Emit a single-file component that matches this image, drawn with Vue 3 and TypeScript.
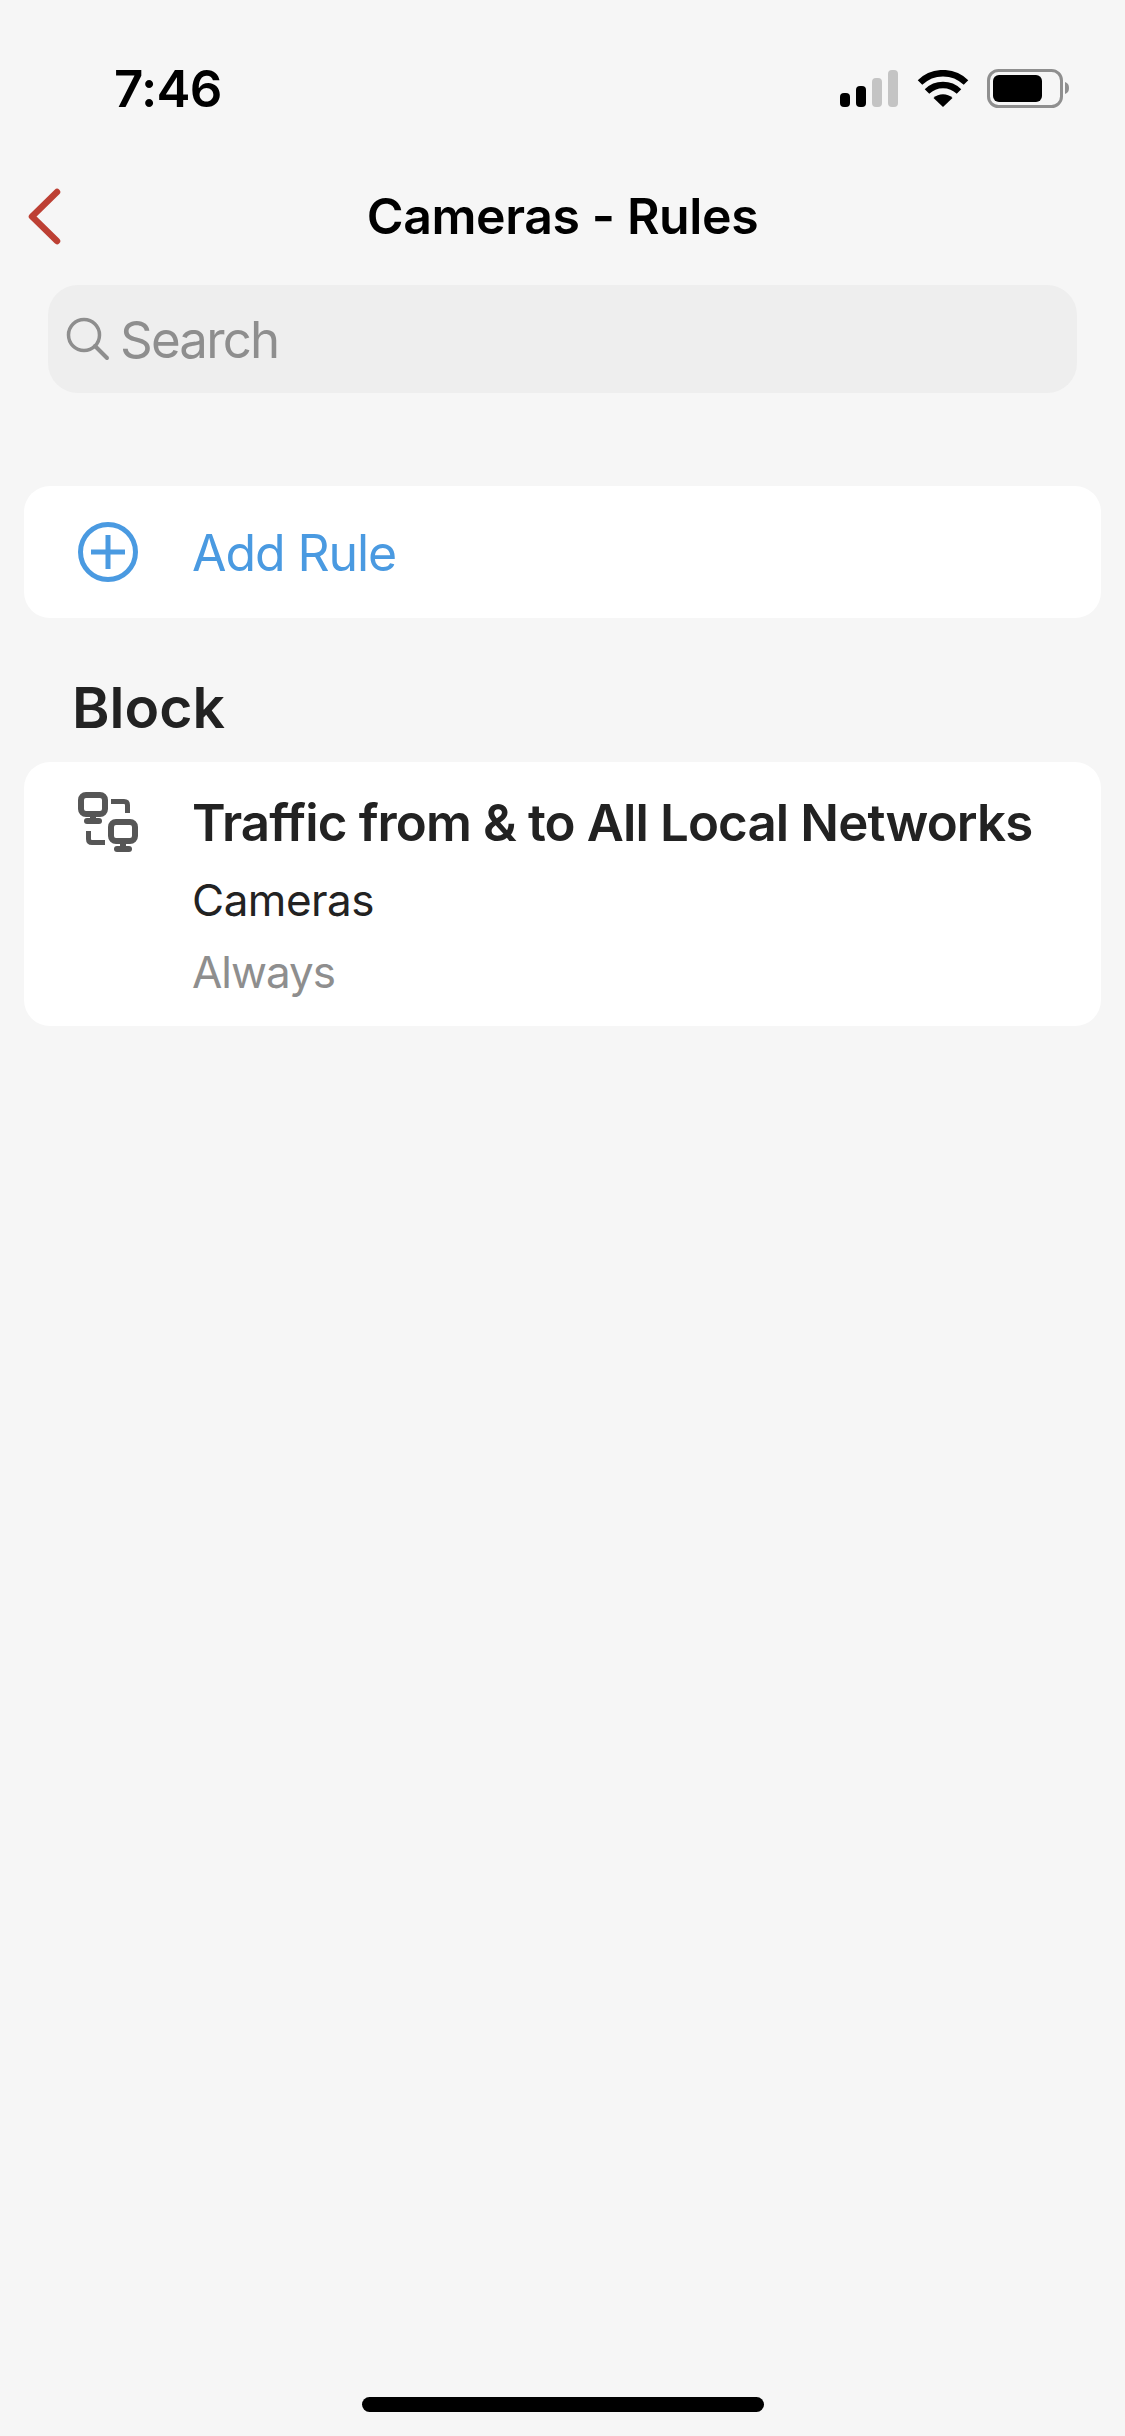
<template>
  <div class="screen">
    <div class="status-bar">
      <span class="time">7:46</span>
      <div class="status-icons">
        <svg class="signal" width="59" height="38" viewBox="0 0 59 38">
          <rect x="0" y="23" width="10" height="14" rx="4" fill="#000" />
          <rect x="16" y="16" width="10" height="21" rx="4" fill="#000" />
          <rect x="32" y="8" width="10" height="29" rx="4" fill="#c4c4c4" />
          <rect x="48" y="0" width="10" height="37" rx="4" fill="#c4c4c4" />
        </svg>
        <svg class="wifi" width="52" height="38" viewBox="0 0 52 38">
          <path d="M26 37 L16.5 28 A14 14 0 0 1 35.5 28 Z" fill="#000" />
          <path d="M10 21.5 A23 23 0 0 1 42 21.5" fill="none" stroke="#000" stroke-width="6.5" />
          <path d="M3 12.5 A33 33 0 0 1 49 12.5" fill="none" stroke="#000" stroke-width="6.5" />
        </svg>
        <svg class="battery" width="82" height="40" viewBox="0 0 82 40">
          <rect x="1.5" y="1.5" width="73" height="36" rx="10" fill="none" stroke="#8f8f8f" stroke-width="3" />
          <rect x="6" y="6" width="49" height="27" rx="6" fill="#000" />
          <path d="M78 13 C81 14 82 16 82 19 C82 22 81 24 78 25 Z" fill="#8f8f8f" />
        </svg>
      </div>
    </div>

    <header class="nav">
      <svg class="back" width="36" height="60" viewBox="0 0 36 60">
        <path d="M31 5 L6 29.5 L31 54" fill="none" stroke="#bd4034" stroke-width="6.5" stroke-linecap="round" stroke-linejoin="round" />
      </svg>
      <h1 class="nav-title">Cameras - Rules</h1>
    </header>

    <div class="search">
      <svg width="44" height="44" viewBox="0 0 44 44">
        <circle cx="18" cy="18" r="15.5" fill="none" stroke="#8e8e8e" stroke-width="3.5" />
        <path d="M29 29 L41 41" fill="none" stroke="#8e8e8e" stroke-width="4" stroke-linecap="round" />
      </svg>
      <span class="search-text">Search</span>
    </div>

    <section class="card add-rule">
      <svg class="row-icon" width="60" height="60" viewBox="0 0 60 60">
        <circle cx="30" cy="30" r="27.5" fill="none" stroke="#4a9ae1" stroke-width="5" />
        <path d="M13 30 H47 M30 13 V47" fill="none" stroke="#4a9ae1" stroke-width="5" />
      </svg>
      <span class="add-label">Add Rule</span>
    </section>

    <h2 class="section-title">Block</h2>

    <section class="card rule">
      <svg class="row-icon" width="60" height="60" viewBox="0 0 60 60">
        <rect x="3" y="3" width="24" height="19" rx="5" fill="none" stroke="#565656" stroke-width="6" />
        <path d="M15 24 V28" stroke="#565656" stroke-width="6" fill="none" />
        <rect x="6" y="26" width="18" height="6" rx="3" fill="#565656" />
        <rect x="33" y="30" width="24" height="19" rx="5" fill="none" stroke="#565656" stroke-width="6" />
        <path d="M45 51 V56" stroke="#565656" stroke-width="6" fill="none" />
        <rect x="36" y="54" width="18" height="6" rx="3" fill="#565656" />
        <path d="M33 9.5 H46 Q49.5 9.5 49.5 13 V21" fill="none" stroke="#565656" stroke-width="5" />
        <path d="M10.5 39 V47 Q10.5 50.5 14 50.5 H27" fill="none" stroke="#565656" stroke-width="5" />
      </svg>
      <div class="rule-text">
        <div class="rule-title">Traffic from &amp; to All Local Networks</div>
        <div class="rule-network">Cameras</div>
        <div class="rule-schedule">Always</div>
      </div>
    </section>

    <div class="home-indicator"></div>
  </div>
</template>

<script setup lang="ts">
</script>

<style>
html,
body {
  margin: 0;
  background: #f6f6f6;
}
</style>

<style scoped>
.screen {
  position: relative;
  box-sizing: border-box;
  width: 1125px;
  height: 2436px;
  overflow: hidden;
  background: #f6f6f6;
  font-family: Inter, "Liberation Sans", sans-serif;
  color: #222;
}

.status-bar {
  display: flex;
  align-items: center;
  justify-content: space-between;
  height: 90px;
  padding: 44px 56px 0 114px;
}

.time {
  font-size: 51px;
  font-weight: 600;
  line-height: 90px;
  letter-spacing: -0.7px;
  color: #000;
}

.status-icons {
  display: flex;
  align-items: center;
  gap: 18px;
}

.nav {
  position: relative;
  display: flex;
  align-items: center;
  justify-content: center;
  height: 80px;
  margin-top: 42px;
}

.back {
  position: absolute;
  left: 26px;
  top: 11px;
}

.nav-title {
  margin: 0;
  font-size: 50px;
  font-weight: 600;
  letter-spacing: -0.4px;
  color: #000;
}

.search {
  display: flex;
  align-items: center;
  gap: 10px;
  box-sizing: border-box;
  height: 108px;
  margin: 29px 48px 0;
  padding-left: 18px;
  border-radius: 30px;
  background: #eee;
}

.search-text {
  font-size: 51px;
  letter-spacing: -1.8px;
  color: #8e8e8e;
}

.card {
  display: flex;
  margin: 0 24px;
  border-radius: 26px;
  background: #fff;
}

.add-rule {
  align-items: center;
  height: 132px;
  margin-top: 93px;
  padding-left: 54px;
}

.row-icon {
  flex-shrink: 0;
}

.add-label {
  margin: 2px 0 0 54px;
  font-size: 50px;
  letter-spacing: -1.1px;
  color: #4a9ae1;
}

.section-title {
  margin: 52px 0 0 72px;
  height: 92px;
  font-size: 57px;
  font-weight: 600;
  line-height: 76px;
  color: #222;
}

.rule {
  box-sizing: border-box;
  height: 264px;
  padding: 30px 0 0 54px;
}

.rule-text {
  margin-left: 54px;
}

.rule-title {
  margin-top: -5px;
  font-size: 51px;
  font-weight: 600;
  line-height: 72px;
  letter-spacing: -0.87px;
  white-space: nowrap;
}

.rule-network {
  margin-top: 5px;
  font-size: 44px;
  line-height: 72px;
  letter-spacing: -0.5px;
}

.rule-schedule {
  font-size: 44px;
  line-height: 72px;
  letter-spacing: -1px;
  color: #8e8e8e;
}

.home-indicator {
  position: absolute;
  left: 362px;
  bottom: 24px;
  width: 402px;
  height: 15px;
  border-radius: 8px;
  background: #000;
}
</style>
